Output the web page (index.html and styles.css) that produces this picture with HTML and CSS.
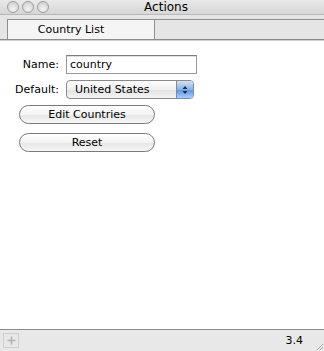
FILE: index.html
```html
<!DOCTYPE html>
<html>
<head>
<meta charset="utf-8">
<link rel="stylesheet" href="styles.css">
</head>
<body>
<div class="window">
  <div class="titlebar">
    <div class="lights">
      <span class="light"></span><span class="light"></span><span class="light"></span>
    </div>
    <div class="title">Actions</div>
  </div>
  <div class="tabbar">
    <div class="tab">Country List</div>
    <div class="tabrest"></div>
  </div>
  <div class="content">
    <div class="row">
      <label class="lbl">Name:</label>
      <div class="input">country</div>
    </div>
    <div class="row row2">
      <label class="lbl">Default:</label>
      <div class="select">
        <span class="seltext">United States</span>
        <span class="stepper">
          <svg width="8" height="12" viewBox="0 0 8 12"><path d="M4 2 L6.5 5 L1.5 5 Z M4 10 L6.5 7 L1.5 7 Z" fill="#1a2a4a"/></svg>
        </span>
      </div>
    </div>
    <div class="btn btn1">Edit Countries</div>
    <div class="btn btn2">Reset</div>
  </div>
  <div class="bottombar">
    <div class="plus">
      <svg width="9" height="9" viewBox="0 0 9 9"><path d="M4.5 0.5 V8.5 M0.5 4.5 H8.5" stroke="#b4b4b4" stroke-width="1.6"/></svg>
    </div>
    <div class="version">3.4</div>
    <div class="grip">
      <svg width="10" height="10" viewBox="0 0 10 10"><path d="M9 3 L3 9 M9 6 L6 9" stroke="#a8a8a8" stroke-width="1"/></svg>
    </div>
  </div>
</div>
</body>
</html>
```

FILE: styles.css
```css
html, body {
  margin: 0;
  padding: 0;
}
body {
  font-family: "DejaVu Sans", "Liberation Sans", sans-serif;
  font-size: 11px;
  color: #000;
  background: #fff;
}
.window {
  width: 324px;
  height: 351px;
  display: flex;
  flex-direction: column;
  overflow: hidden;
}
.titlebar {
  height: 14px;
  background: linear-gradient(#e9e9e9, #d6d6d6);
  position: relative;
  display: flex;
  align-items: center;
}
.lights {
  display: flex;
  gap: 3px;
  padding-left: 7px;
  position: relative;
  z-index: 1;
}
.light {
  width: 12px;
  height: 12px;
  border-radius: 50%;
  box-sizing: border-box;
  border: 1px solid #9e9e9e;
  background: radial-gradient(circle at 50% 70%, #f4f4f4, #c9c9c9);
}
.title {
  position: absolute;
  left: 0;
  right: 0;
  top: 0;
  text-align: center;
  font-size: 12px;
  line-height: 14px;
  padding-left: 8px;
}
.tabbar {
  height: 24px;
  background: #e5e5e5;
  border-top: 1px solid #b9b9b9;
  display: flex;
  align-items: flex-end;
  border-bottom: 1px solid #8c8c8c;
  box-shadow: 0 1px 0 #d0d0d0;
}
.tab {
  margin-left: 7px;
  width: 148px;
  height: 20px;
  box-sizing: border-box;
  border: 1px solid #8f8f8f;
  border-bottom: none;
  background: #f5f5f5;
  text-align: center;
  font-size: 11px;
  line-height: 20px;
  padding-right: 20px;
}
.tabrest {
  flex: 1;
  height: 20px;
  border-top: 1px solid #8f8f8f;
  box-sizing: border-box;
}
.content {
  flex: 1;
  display: flex;
  flex-direction: column;
  padding-top: 15px;
}
.row {
  display: flex;
  align-items: center;
}
.row2 {
  margin-top: 6px;
}
.lbl {
  width: 66px;
  text-align: right;
  padding-right: 7px;
  box-sizing: border-box;
  font-size: 11px;
}
.input {
  width: 131px;
  height: 19px;
  box-sizing: border-box;
  border: 1px solid #9a9a9a;
  border-top-color: #7d7d7d;
  padding-left: 3px;
  line-height: 17px;
  font-size: 11px;
  box-shadow: inset 0 1px 0 #e0e0e0;
}
.select {
  width: 128px;
  height: 19px;
  box-sizing: border-box;
  border: 1px solid #8a8a8a;
  border-radius: 4px;
  background: linear-gradient(#fdfdfd, #f0f0f0 50%, #e2e2e2 51%, #f4f4f4);
  display: flex;
  align-items: center;
  overflow: hidden;
}
.seltext {
  flex: 1;
  padding-left: 8px;
  font-size: 11px;
}
.stepper {
  width: 16px;
  height: 17px;
  background: linear-gradient(#cfe2fa, #86b3ee 50%, #5b95e4 51%, #a9cdf6);
  border-left: 1px solid #6b8dbf;
  display: flex;
  align-items: center;
  justify-content: center;
}
.btn {
  margin-left: 19px;
  width: 136px;
  height: 19px;
  box-sizing: border-box;
  border: 1px solid #7a7a7a;
  border-radius: 10px;
  background: linear-gradient(#ffffff, #f3f3f3 50%, #e6e6e6 51%, #f6f6f6);
  text-align: center;
  line-height: 17px;
  font-size: 11px;
}
.btn1 {
  margin-top: 6px;
}
.btn2 {
  margin-top: 9px;
}
.bottombar {
  height: 21px;
  background: #e8e8e8;
  border-top: 1px solid #8c8c8c;
  display: flex;
  align-items: center;
  position: relative;
}
.plus {
  margin-left: 3px;
  width: 16px;
  height: 15px;
  box-sizing: border-box;
  border: 1px solid #cfcfcf;
  display: flex;
  align-items: center;
  justify-content: center;
}
.version {
  margin-left: auto;
  margin-right: 21px;
  font-size: 11px;
}
.grip {
  position: absolute;
  right: 0;
  bottom: 0;
  width: 10px;
  height: 10px;
}
```
